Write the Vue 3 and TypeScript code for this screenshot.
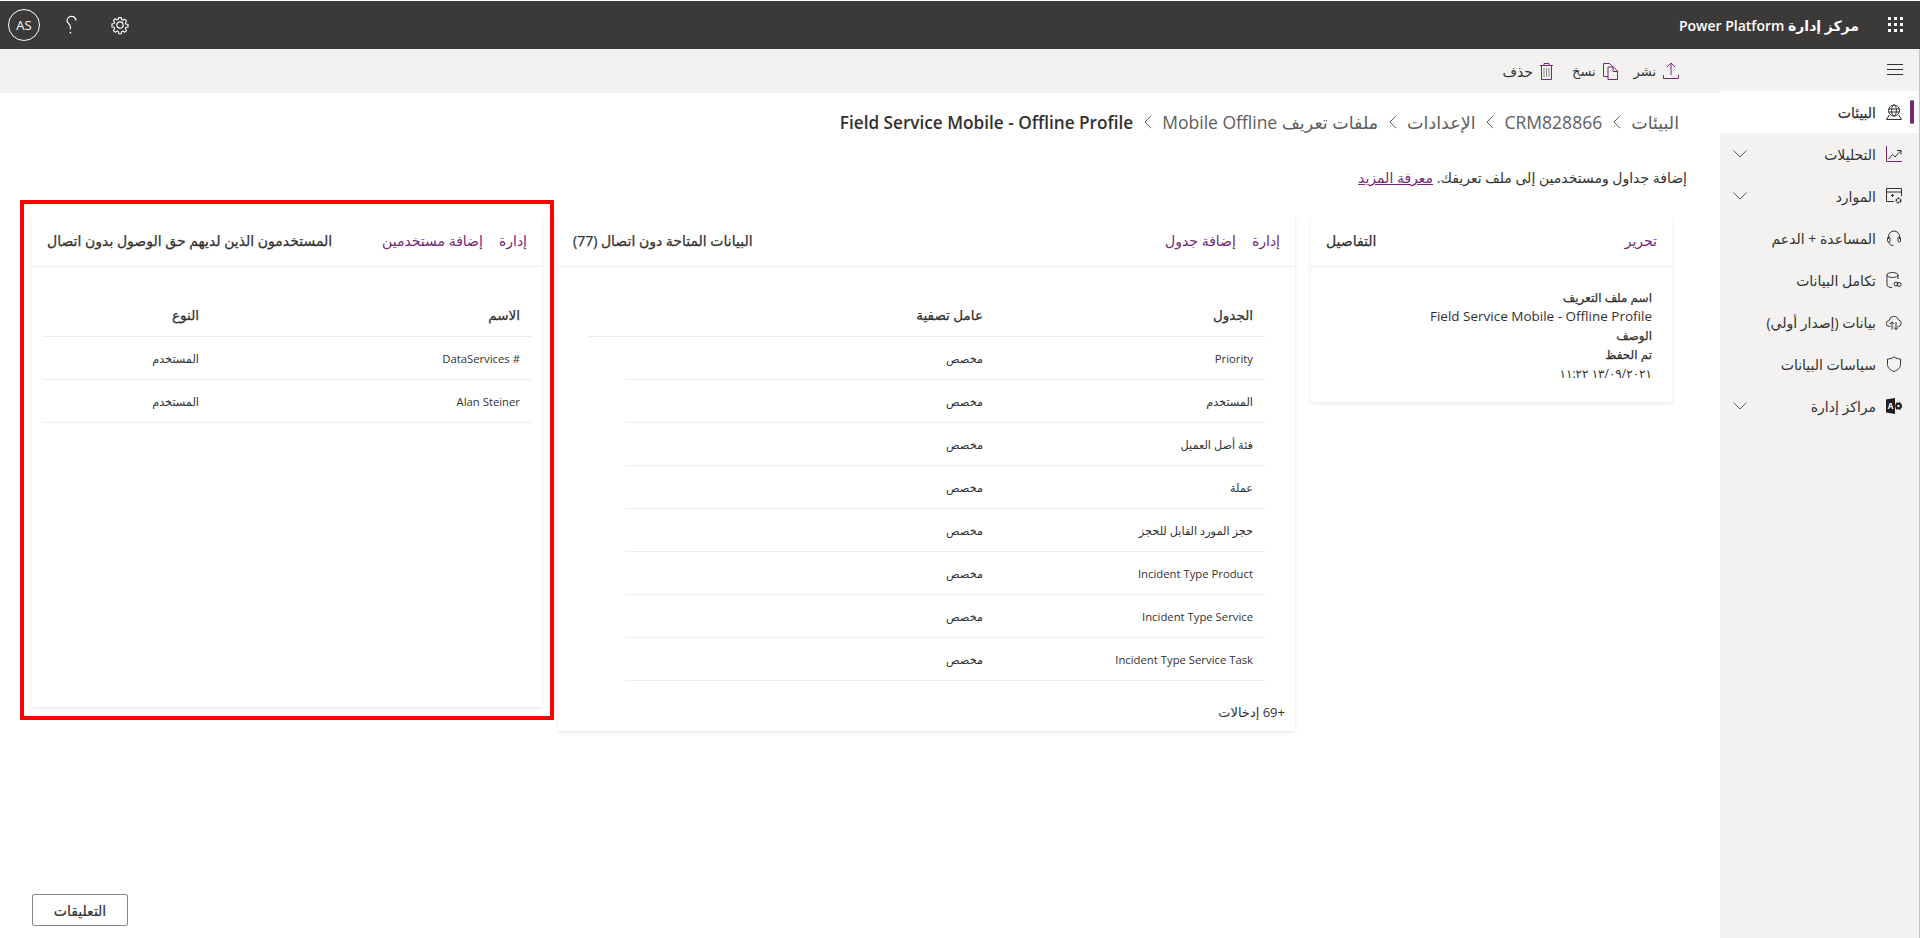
<template>
  <div class="app" dir="rtl">
    <header class="topbar">
      <div class="brand">
        <svg class="waffle" width="16" height="16" viewBox="0 0 16 16" fill="#fff">
          <template v-for="y in [1, 7, 13]" :key="y">
            <rect v-for="x in [1, 7, 13]" :key="x" :x="x - 1" :y="y - 1" width="3" height="3" />
          </template>
        </svg>
        <span class="brand-name">مركز إدارة Power Platform</span>
      </div>
      <div class="top-actions">
        <svg width="20" height="20" viewBox="0 0 20 20" fill="none" stroke="#fff" stroke-width="1.2">
          <circle cx="10" cy="10" r="3.2" />
          <path d="M8.6 1.8h2.8l.4 2.3 1.5.7 2-1.3 2 2-1.3 2 .6 1.5 2.3.4v2.8l-2.3.4-.6 1.5 1.3 2-2 2-2-1.3-1.5.6-.4 2.3H8.6l-.4-2.3-1.5-.6-2 1.3-2-2 1.3-2-.6-1.5-2.3-.4V8.8l2.3-.4.6-1.5-1.3-2 2-2 2 1.3 1.5-.7z" transform="translate(1 1) scale(.9)" />
        </svg>
        <svg width="16" height="20" viewBox="0 0 16 20" fill="none" stroke="#fff" stroke-width="1.2">
          <path d="M13 5.5C13 3 11 1.4 8.6 1.4 6.2 1.4 4 3.2 4 5.8c0 2.6 3.4 3 3.4 6.2v2.2" />
          <circle cx="7.4" cy="17.6" r=".9" fill="#fff" stroke="none" />
        </svg>
        <div class="avatar" dir="ltr">AS</div>
      </div>
    </header>

    <div class="shell">
      <nav class="sidebar">
        <button class="hamburger" aria-label="menu">
          <svg width="16" height="12" viewBox="0 0 16 12" stroke="#323130" stroke-width="1"><path d="M0 .5h16M0 5.5h16M0 10.5h16" /></svg>
        </button>
        <a v-for="item in navItems" :key="item.label" class="nav-item" :class="{ active: item.active }">
          <span class="nav-icon" v-html="item.icon"></span>
          <span class="nav-label">{{ item.label }}</span>
          <svg v-if="item.expand" class="nav-chevron" width="14" height="8" viewBox="0 0 14 8" fill="none" stroke="#605e5c"><path d="M.5.5 7 7 13.500.5" /></svg>
        </a>
      </nav>

      <main class="main">
        <div class="toolbar">
          <button class="tool">
            <svg width="16" height="18" viewBox="0 0 16 18" fill="none" stroke="#742774"><path d="M8 13V1.200M3.800 5.200 8 1l4.200 4.200M.5 13v3.500h15V13" /></svg>
            <span>نشر</span>
          </button>
          <button class="tool">
            <svg width="15" height="17" viewBox="0 0 15 17" fill="none" stroke="#742774"><path d="M5 13.500H.5V.5h6l3.500 3.500M5 4h5.500L14.500 8v8.500H5zM10 4v4.500h4.500" /></svg>
            <span>نسخ</span>
          </button>
          <button class="tool">
            <svg width="13" height="17" viewBox="0 0 13 17" fill="none" stroke="#742774"><path d="M0 2.500h13M4 2.500V.5h5v2M1.500 2.500v14h10v-14" /><path d="M4 5v9M6.500 5v9M9 5v9" stroke="#8a8886" /></svg>
            <span>حذف</span>
          </button>
        </div>

        <div class="crumbs">
          <template v-for="(c, i) in crumbs" :key="c">
            <span class="crumb" :class="{ last: i === crumbs.length - 1 }">{{ c }}</span>
            <svg v-if="i < crumbs.length - 1" class="crumb-sep" width="8" height="14" viewBox="0 0 8 14" fill="none" stroke="#605e5c"><path d="M7 .8 1 7l6 6.200" /></svg>
          </template>
        </div>

        <p class="intro">إضافة جداول ومستخدمين إلى ملف تعريفك. <a class="link-u">معرفة المزيد</a></p>

        <div class="cards">
          <section class="card card-details">
            <div class="card-head">
              <div class="links"><a>تحرير</a></div>
              <h2>التفاصيل</h2>
            </div>
            <dl class="details">
              <dt>اسم ملف التعريف</dt>
              <dd dir="rtl">Field Service Mobile - Offline Profile</dd>
              <dt>الوصف</dt>
              <dt>تم الحفظ</dt>
              <dd>١٣/٠٩/٢٠٢١ ١١:٢٢</dd>
            </dl>
          </section>

          <section class="card card-data">
            <div class="card-head">
              <div class="links"><a>إدارة</a><a>إضافة جدول</a></div>
              <h2>البيانات المتاحة دون اتصال (77)</h2>
            </div>
            <div class="table">
              <div class="row row-head">
                <span>الجدول</span>
                <span>عامل تصفية</span>
              </div>
              <div v-for="t in tables" :key="t" class="row">
                <span>{{ t }}</span>
                <span>مخصص</span>
              </div>
            </div>
            <div class="more">+69 إدخالات</div>
          </section>

          <section class="card card-users">
            <div class="card-head">
              <div class="links"><a>إدارة</a><a>إضافة مستخدمين</a></div>
              <h2>المستخدمون الذين لديهم حق الوصول بدون اتصال</h2>
            </div>
            <div class="table">
              <div class="row row-head">
                <span>الاسم</span>
                <span>النوع</span>
              </div>
              <div v-for="u in users" :key="u" class="row">
                <span>{{ u }}</span>
                <span>المستخدم</span>
              </div>
            </div>
          </section>
        </div>

        <footer class="foot">
          <button class="feedback">التعليقات</button>
        </footer>
      </main>
    </div>
  </div>
</template>

<script setup lang="ts">
interface NavItem {
  label: string
  icon: string
  active?: boolean
  expand?: boolean
}

const svg = (body: string) =>
  `<svg width="16" height="16" viewBox="0 0 16 16" fill="none" stroke="#323130" stroke-width="1">${body}</svg>`

const navItems: NavItem[] = [
  {
    label: 'البيئات',
    active: true,
    icon: svg('<circle cx="8" cy="6.500" r="5.500"/><ellipse cx="8" cy="6.500" rx="2.400" ry="5.500"/><path d="M2.500 5h11M2.500 8h11M3.200 11 .5 15.500h15L12.800 11"/>'),
  },
  {
    label: 'التحليلات',
    expand: true,
    icon: svg('<path d="M.5 0v15.500H16" stroke="#742774"/><path d="m2.500 13 4-4.500 2.500 2.500 6-6.500M11 4.500h4v4"/>'),
  },
  {
    label: 'الموارد',
    expand: true,
    icon: svg('<path d="M8 13.500H.5V.5h15V8M.5 4h15"/><path d="M5 7.500h3M6.500 6v3" /><circle cx="12.500" cy="12.500" r="2.200" stroke-dasharray="2 .8" stroke-width="1.600"/>'),
  },
  {
    label: 'المساعدة + الدعم',
    icon: svg('<path d="M2.500 9V6.500a5.500 5.500 0 0 1 11 0V9"/><rect x="1.500" y="7" width="2.500" height="5" rx="1.200"/><rect x="12" y="7" width="2.500" height="5" rx="1.200"/><path d="M3 12c0 2.500 2 3.500 4.500 3.500"/>'),
  },
  {
    label: 'تكامل البيانات',
    icon: svg('<ellipse cx="6.500" cy="3" rx="5.500" ry="2.500"/><path d="M1 3v10c0 1.400 2 2.300 5 2.500M12 3v4"/><circle cx="10" cy="12" r="2"/><circle cx="13" cy="12.500" r="2"/>'),
  },
  {
    label: 'بيانات (إصدار أولي)',
    icon: svg('<path d="M4.500 12.500H3.500a3 3 0 0 1-.4-6 4.800 4.800 0 0 1 9.400-.5 3.300 3.300 0 0 1 0 6.500h-1"/><path d="M6 15.500V8M3.800 10 6 7.800 8.200 10M10 8v7.500M7.800 13.500l2.200 2 2.200-2"/>'),
  },
  {
    label: 'سياسات البيانات',
    icon: svg('<path d="M8 .8c2 1.600 4 2.200 6.500 2.200v5.500c0 3.200-2.600 5.600-6.500 7-3.900-1.400-6.500-3.800-6.500-7V3C4 3 6 2.400 8 .8z"/>'),
  },
  {
    label: 'مراكز إدارة',
    expand: true,
    icon: `<svg width="16" height="16" viewBox="0 0 16 16"><path d="M0 1.500 9 0v16l-9-1.500z" fill="#201f1e"/><text x="4.500" y="11" font-size="8" font-weight="700" text-anchor="middle" fill="#fff" font-family="Open Sans">A</text><circle cx="12.500" cy="8" r="2.200" fill="none" stroke="#201f1e" stroke-width="2"/><circle cx="12.500" cy="8" r="3.400" fill="none" stroke="#201f1e" stroke-width="1.200" stroke-dasharray="1.600 1.600"/></svg>`,
  },
]

const crumbs = ['البيئات', 'CRM828866', 'الإعدادات', 'ملفات تعريف Mobile Offline', 'Field Service Mobile - Offline Profile']

const tables = [
  'Priority',
  'المستخدم',
  'فئة أصل العميل',
  'عملة',
  'حجز المورد القابل للحجز',
  'Incident Type Product',
  'Incident Type Service',
  'Incident Type Service Task',
]

const users = ['# DataServices', 'Alan Steiner']
</script>

<style>
html, body { height: 100%; overflow: hidden; }
</style>

<style scoped>
.app {
  height: 938px;
  display: flex;
  flex-direction: column;
  font-family: "Open Sans", "Noto Sans", "DejaVu Sans", sans-serif;
  font-size: 14px;
  color: #323130;
  background: #fff;
  padding-top: 1px;
  box-sizing: border-box;
}

.topbar {
  height: 48px;
  flex: none;
  background: #3b3a39;
  color: #fff;
  display: flex;
  justify-content: space-between;
  align-items: center;
}
.brand { display: flex; align-items: center; }
.waffle { margin: 0 16px 0 29px; }
.brand-name { font-size: 14px; font-weight: 600; }
.top-actions { display: flex; align-items: center; }
.top-actions svg:nth-child(1) { margin-left: 31px; }
.top-actions svg:nth-child(2) { margin-left: 23px; }
.avatar {
  width: 30px;
  height: 30px;
  border: 1px solid #fff;
  border-radius: 50%;
  margin-left: 8px;
  display: flex;
  align-items: center;
  justify-content: center;
  font-size: 13px;
}

.shell { flex: 1; display: flex; min-height: 0; }

.sidebar {
  width: 199px;
  flex: none;
  background: #f3f2f1;
  border-right: 1px solid #c8c6c4;
  display: flex;
  flex-direction: column;
}
.hamburger {
  height: 42px;
  background: none;
  border: 0;
  padding: 0 16px;
  display: flex;
  align-items: center;
}
.nav-item {
  height: 42px;
  display: flex;
  align-items: center;
  padding-right: 17px;
  position: relative;
}
.nav-item.active { background: #fff; -webkit-text-stroke: .25px; }
.nav-item.active::before {
  content: "";
  position: absolute;
  right: 5px;
  top: 9px;
  width: 4px;
  height: 24px;
  border-radius: 2px;
  background: #742774;
}
.nav-icon { width: 16px; height: 16px; display: flex; margin-left: 10px; }
.nav-chevron { margin-right: auto; margin-left: 13px; }

.main { flex: 1; min-width: 0; display: flex; flex-direction: column; }

.toolbar {
  height: 44px;
  flex: none;
  background: #f3f2f1;
  display: flex;
  align-items: center;
  padding-right: 41px;
  gap: 16px;
}
.tool {
  display: flex;
  align-items: center;
  gap: 7px;
  border: 0;
  background: none;
  padding: 0;
  font: inherit;
  font-size: 13px;
  color: #323130;
}
.tool:last-child { margin-right: 3px; font-size: 14px; }

.crumbs {
  display: flex;
  align-items: center;
  gap: 10.5px;
  padding: 14px 41px 0 0;
  height: 30px;
  font-size: 17.5px;
  color: #605e5c;
}
.crumb.last { font-size: 17.2px; font-weight: 600; color: #323130; }

.intro { margin: 0; padding: 31px 33px 0 0; height: 28px; line-height: 19px; }
.link-u { color: #742774; text-decoration: underline; }

.cards {
  display: flex;
  align-items: flex-start;
  gap: 16px;
  padding: 19px 48px 0 32px;
}
.card {
  background: #fff;
  box-shadow: 0 1.6px 3.6px rgba(0, 0, 0, .1), 0 .3px .9px rgba(0, 0, 0, .07);
  flex: none;
}
.card-details { width: 361px; height: 187px; }
.card-data { width: 737px; height: 516px; }
.card-users { width: 510px; height: 492px; position: relative; }
/* red annotation drawn around the users card */
.card-users::after {
  content: "";
  position: absolute;
  inset: -15px -12px -13px -12px;
  border: 4px solid #f00;
  pointer-events: none;
}

.card-head {
  height: 51px;
  border-bottom: 1px solid #edebe9;
  display: flex;
  align-items: center;
  justify-content: space-between;
  padding: 0 15px;
}
.card-head h2 { margin: 0; font-size: 14px; font-weight: 400; -webkit-text-stroke: .25px; color: #323130; }
.links { display: flex; gap: 16px; }
.links a { color: #742774; }

.details { margin: 0; padding: 21px 20px 0; font-size: 12px; line-height: 19px; }
.details dt { -webkit-text-stroke: .25px; }
.details dd { margin: 0; }
.details dd:first-of-type { font-size: 13.5px; }

.table { padding: 27px 30px 0; }
.row {
  height: 42px;
  border-bottom: 1px solid #edebe9;
  display: grid;
  grid-template-columns: 270px 1fr;
  align-items: center;
  padding-right: 12px;
  margin-left: 37px;
  font-size: 11.3px;
}
.row-head { margin-left: 0; font-size: 13.5px; -webkit-text-stroke: .25px; }
.more { padding: 21px 10px 0 0; line-height: 20px; font-size: 13px; }

.card-users .table { padding: 27px 10px 0; }
.card-users .row { margin-left: 0; grid-template-columns: 321px 1fr; }

.foot {
  margin-top: auto;
  display: flex;
  justify-content: flex-end;
  padding: 0 0 12px 32px;
}
.feedback {
  width: 96px;
  height: 32px;
  background: #fff;
  border: 1px solid #8a8886;
  border-radius: 2px;
  font: inherit;
  -webkit-text-stroke: .2px;
  color: #323130;
}
</style>
